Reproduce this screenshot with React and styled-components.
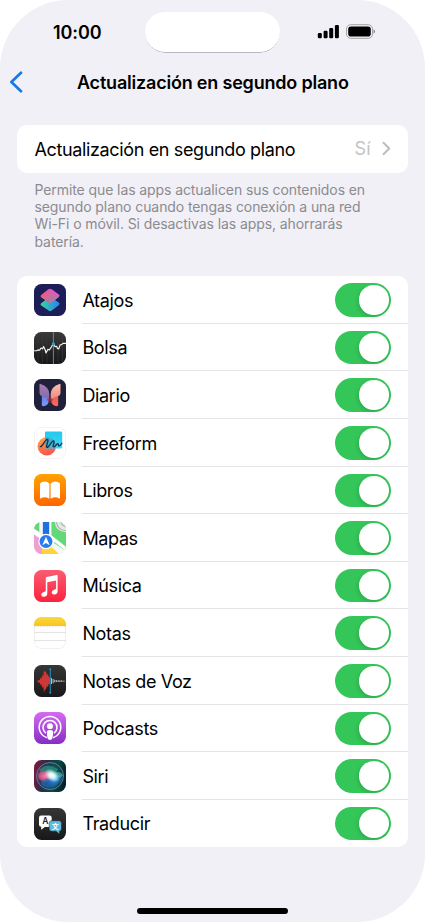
import React, { useState } from "react";
import styled, { createGlobalStyle } from "styled-components";

const GlobalStyle = createGlobalStyle`
  * {
    box-sizing: border-box;
  }

  body {
    margin: 0;
    background: #ffffff;
    font-family: Inter, "Liberation Sans", sans-serif;
    color: #000000;
  }

  svg {
    display: block;
  }
`;

const Screen = styled.div`
  width: 425px;
  height: 922px;
  display: flex;
  flex-direction: column;
  background: #f1f0f6;
  border-radius: 68px;
  overflow: hidden;
`;

const StatusBar = styled.div`
  display: grid;
  grid-template-columns: 145px 135px 145px;
  height: 64px;
  padding-top: 12px;
  flex-shrink: 0;
`;

const Clock = styled.div`
  padding-left: 53px;
  line-height: 41px;
  font-size: 18px;
  font-weight: 600;
  letter-spacing: -0.1px;
`;

const Island = styled.div`
  height: 40px;
  border-radius: 20px;
  background: #ffffff;
  box-shadow: 0 1px 0.5px -0.6px rgba(60, 60, 65, 0.6);
`;

const StatusIcons = styled.div`
  display: flex;
  align-items: flex-start;
  gap: 7px;
  padding: 12px 0 0 37px;
`;

const NavBar = styled.div`
  display: flex;
  align-items: center;
  height: 36px;
  padding-left: 9px;
  flex-shrink: 0;
`;

const BackButton = styled.button`
  width: 68px;
  padding: 0;
  border: 0;
  background: none;
`;

const Title = styled.h1`
  margin: 0;
  padding-top: 1px;
  font-size: 18px;
  line-height: 36px;
  font-weight: 600;
  letter-spacing: -0.2px;
  white-space: nowrap;
`;

const Card = styled.div`
  width: 391px;
  margin: ${(props) => props.$top}px 0 0 17px;
  background: #ffffff;
  border-radius: 10px;
  overflow: hidden;
  flex-shrink: 0;
`;

const LinkRow = styled.div`
  display: flex;
  align-items: center;
  height: 47.5px;
  padding: 0 17.5px;
`;

const Label = styled.span`
  flex: 1;
  padding-top: 1.5px;
  font-size: 18px;
  letter-spacing: ${(props) => props.$spacing || "-0.36px"};
  white-space: nowrap;
`;

const Value = styled.span`
  margin-right: 11px;
  font-size: 18px;
  color: #c3c3c7;
`;

const Description = styled.p`
  width: 360px;
  margin: 8px 0 0 34.5px;
  font-size: 14px;
  line-height: 17.4px;
  color: #8b8b90;
  letter-spacing: -0.09px;
  flex-shrink: 0;
`;

const AppRow = styled.div`
  display: flex;
  align-items: center;
  height: 47.62px;
  padding-left: 17.4px;
`;

const AppContent = styled.div`
  display: flex;
  flex: 1;
  align-items: center;
  align-self: stretch;
  margin-left: 16px;
  padding-right: 17.5px;
  border-bottom: 1px solid ${(props) => (props.$last ? "transparent" : "#e4e4e7")};
`;

const Switch = styled.button`
  display: flex;
  align-items: center;
  justify-content: ${(props) => (props.$on ? "flex-end" : "flex-start")};
  width: 55.5px;
  height: 33.5px;
  margin-top: 1px;
  padding: 0 2px;
  border: 0;
  border-radius: 17px;
  background: ${(props) => (props.$on ? "#34c659" : "#e9e9ea")};
`;

const Knob = styled.span`
  width: 29.5px;
  height: 29.5px;
  border-radius: 50%;
  background: #ffffff;
  box-shadow: -1px 2px 4px rgba(0, 0, 0, 0.14);
`;

const HomeArea = styled.div`
  display: flex;
  flex: 1;
  align-items: flex-end;
  justify-content: center;
  padding-bottom: 8.5px;
`;

const HomeBar = styled.div`
  width: 151px;
  height: 5.5px;
  border-radius: 3px;
  background: #000000;
`;

const IconSvg = styled.svg`
  width: 32px;
  height: 32px;
  border-radius: 7.5px;
  flex-shrink: 0;
`;

function AppIcon({ children }) {
  return <IconSvg viewBox="0 0 32 32">{children}</IconSvg>;
}

function Gradient({ id, from, to, x2 = 0, y2 = 1 }) {
  return (
    <linearGradient id={id} x1="0" y1="0" x2={x2} y2={y2}>
      <stop offset="0" stopColor={from} />
      <stop offset="1" stopColor={to} />
    </linearGradient>
  );
}

function AtajosIcon() {
  return (
    <AppIcon>
      <defs>
        <Gradient id="atajosTop" from="#f25a78" to="#d65ccb" x2={0.8} y2={0} />
        <Gradient id="atajosBottom" from="#35d6a4" to="#2b7ff0" x2={1} y2={0} />
        <Gradient id="atajosFold" from="#f0607e" to="#9a83a8" x2={1} y2={0.4} />
      </defs>
      <rect width="32" height="32" fill="#1d1d58" />
      <path d="M7.2 19.2 14.6 13.6q1.4-1 2.8 0L24.8 18.6q1.7 1.2 0 2.6L17.8 26.6q-1.6 1.2-3.2 0L7.2 21.4q-1.5-1.1 0-2.2Z" fill="url(#atajosBottom)" />
      <path d="M7.2 11 14.4 5.3q1.7-1.3 3.4 0L24.8 10.4q1.7 1.2 0 2.5L17.8 18.3q-1.6 1.2-3.2 0L7.2 13.3q-1.5-1.1 0-2.3Z" fill="url(#atajosTop)" />
      <path d="m16.8 9.4 8 3.6-7 5.3q-1.6 1.2-3.2 0L7.2 13.3Z" fill="url(#atajosFold)" opacity="0.85" />
    </AppIcon>
  );
}

function BolsaIcon() {
  return (
    <AppIcon>
      <defs>
        <Gradient id="bolsaBg" from="#393939" to="#171717" />
      </defs>
      <rect width="32" height="32" fill="url(#bolsaBg)" />
      <path d="M4 0v32M8.500 0v32M13 0v32M24 0v32M28.500 0v32" stroke="#3d3d3d" strokeWidth="0.5" />
      <path d="M19.400 0v32" stroke="#2d9bc9" strokeWidth="1" />
      <path d="M0 18.700h2.500l1.500-.8 1.700.2L7 16l1.600.8 1-2.300 1.600 3.500.8 3 1.800-3.600 1.500.6 2.200-3.200 1.900-3.600 1.700 3.500 1.500-.4.900 2.100 1.200.5 1.500-4.100 1.500-.2 1.200-1.300H32" fill="none" stroke="#f4f4f4" strokeWidth="1.15" strokeLinejoin="round" />
      <circle cx="19.400" cy="11.800" r="1.600" fill="#2d9bc9" />
    </AppIcon>
  );
}

function DiarioIcon() {
  return (
    <AppIcon>
      <defs>
        <Gradient id="diarioLeft" from="#a77fb0" to="#7a66ab" />
        <Gradient id="diarioRight" from="#f8c0ab" to="#f47f78" />
        <Gradient id="diarioBlue" from="#6779dc" to="#789cff" />
        <Gradient id="diarioRed" from="#e65c5a" to="#ff675b" />
      </defs>
      <rect width="32" height="32" fill="#20203a" />
      <path d="M7.800 15.600 14.800 18v4.500q-1.500 5-6 4.600-1-.2-1-1.300Z" fill="url(#diarioBlue)" />
      <path d="M24.200 15.600 17.200 18v4.500q1.500 5 6 4.600 1-.2 1-1.300Z" fill="url(#diarioRed)" />
      <path d="M5.500 5.600q0-1 1-.7 8.300 2.500 8.800 10v7.200q-1.700-4-7-4.900-2.600-.6-2.800-3Z" fill="url(#diarioLeft)" />
      <path d="M26.500 5.600q0-1-1-.7-8.300 2.500-8.800 10v7.200q1.700-4 7-4.900 2.600-.6 2.800-3Z" fill="url(#diarioRight)" />
      <path d="M15.300 19v5.800l-2.300-4.600ZM16.700 19v5.800l2.300-4.600Z" fill="#a43c5c" />
    </AppIcon>
  );
}

function FreeformIcon() {
  return (
    <AppIcon>
      <defs>
        <Gradient id="freeformSquare" from="#23c9ed" to="#43d5f5" />
        <Gradient id="freeformCircle" from="#ffad4c" to="#fb5550" x2={0.3} />
      </defs>
      <rect x="0.300" y="0.300" width="31.400" height="31.400" rx="7.300" fill="#fff" stroke="#e5e5e5" strokeWidth="0.6" />
      <circle cx="12.800" cy="19.200" r="9.200" fill="url(#freeformCircle)" />
      <rect x="11" y="4.400" width="17.200" height="17.200" rx="1.300" fill="url(#freeformSquare)" />
      <path d="M11 10.200a9.200 9.200 0 0 1 10.700 11.400H12.300q-1.300 0-1.300-1.300Z" fill="#4b8fa8" opacity="0.5" />
      <path d="M6.300 19.600c2.200.6 4.300-6.900 7-7.200 2.300-.1-2.300 8-.2 8 2.200 0 4.400-7.200 6.500-6.500 1.800.7-1.700 5.600.2 5.900 1.900.2 2.600-3.700 4.100-3.200 1 .4-.2 2.100 1 2.300q1.400.2 2.900-2.600" fill="none" stroke="#15334b" strokeWidth="1.35" strokeLinecap="round" />
    </AppIcon>
  );
}

function LibrosIcon() {
  return (
    <AppIcon>
      <defs>
        <Gradient id="librosBg" from="#ffa300" to="#ff6500" />
      </defs>
      <rect width="32" height="32" fill="url(#librosBg)" />
      <path d="M15.400 9.700Q13.700 7.600 10.800 7.600 7.800 7.600 6 9.600v14.500q0 .7.700.3 1.900-1.200 4.100-1.200t4 1.200q.6.400.6-.3ZM16.600 9.700q1.700-2.100 4.600-2.100 3 0 4.800 2v14.500q0 .7-.7.300-1.900-1.200-4.100-1.200t-4 1.200q-.6.400-.6-.3Z" fill="#fff" />
    </AppIcon>
  );
}

function MapasIcon() {
  return (
    <AppIcon>
      <rect width="32" height="32" fill="#f2f3f3" />
      <path d="M0 0h5.300v10L0 6.500Z" fill="#69d477" />
      <path d="M17.500 0H32v26L17.500 14Z" fill="#63d878" />
      <path d="M21 0q0 9.500 11 10.300V0Z" fill="#e4ebe5" />
      <path d="M22.500 0q.8 8 9.500 8.700M27 0q.5 4 5 4.600" fill="none" stroke="#a9b5ad" strokeWidth="1.1" />
      <path d="M0 12.500 8 18v14H0Z" fill="#ef9fd3" />
      <path d="M8 32v-8h8l9 8Z" fill="#ffd43b" />
      <path d="m18 22 14 8v2h-7Z" fill="#f7f7f7" />
      <path d="m20 21 12 8v-5l-9-7Z" fill="#76dd86" />
      <path d="m17 13 15 12v4L17 17Z" fill="#fff" />
      <path d="M0 7.200 12 16v3.500L0 12Z" fill="#fff" />
      <rect x="7.800" width="8.400" height="17" fill="#fff" />
      <rect x="8.800" width="6.400" height="17" fill="#2070de" />
      <circle cx="12" cy="19.500" r="7.700" fill="#fff" />
      <circle cx="12" cy="19.500" r="6.500" fill="#267cf0" />
      <path d="m12 14.700 3.300 7.600q.4 1-.5.500L12 21.100l-2.800 1.700q-.9.500-.5-.5Z" fill="#fff" />
    </AppIcon>
  );
}

function MusicaIcon() {
  return (
    <AppIcon>
      <defs>
        <Gradient id="musicaBg" from="#fb5c72" to="#fb233e" />
      </defs>
      <rect width="32" height="32" fill="url(#musicaBg)" />
      <path
        d="M11.800 7.900q0-.8.800-1l10-2q1-.2 1 .8v15.200q0 3.200-3.200 3.500-2.600.2-2.700-2 0-2.200 2.500-2.700 1.900-.2 1.900-1.500v-7.700l-8.800 1.800v11q0 3.200-3.400 3.500-2.600.2-2.700-2 0-2.200 2.600-2.700 2-.2 2-1.500Z"
        fill="#fff"
      />
    </AppIcon>
  );
}

function NotasIcon() {
  return (
    <AppIcon>
      <defs>
        <Gradient id="notasTop" from="#fcd83f" to="#f8c51b" />
      </defs>
      <rect x="0.300" y="0.300" width="31.400" height="31.400" rx="7.300" fill="#fff" stroke="#dedede" strokeWidth="0.6" />
      <rect width="32" height="9" fill="url(#notasTop)" />
      <path d="M0 9.700h32" stroke="#bdb9ad" strokeWidth="0.6" strokeDasharray="0.6 0.9" />
      <path d="M0 15.500h32M0 23.500h32" stroke="#d8d8da" strokeWidth="0.7" />
    </AppIcon>
  );
}

function NotasDeVozIcon() {
  return (
    <AppIcon>
      <defs>
        <Gradient id="vozBg" from="#363637" to="#19191b" />
      </defs>
      <rect width="32" height="32" fill="url(#vozBg)" />
      <path d="M1.500 16h2l1-1 1 .4.900-2.900.9 1.500.9-4.500.9 2.500 1-6.700 1 2.200.9-1.500.9 4.400.9-1.600.9 3.200.9-.5.500 2.500v4l-.5 1.500-.9-.5-.9 3.200-.9-1.600-.9 4.400-.9-1.500-1 4.200-1-7-.9 2.500-.9-4.500-.9 1.500-.9-2.900-1 .4-1-1.500Z" fill="#cf3935" />
      <path d="M17 13h1v6h-1ZM18.600 14h1v4.300h-1ZM20.200 14.800h1v2.500h-1ZM21.800 15.100h1V17h-1ZM22.800 15.700h8v.7h-8ZM24.500 15.200h1V17h-1ZM27 15.300h.8v1.500H27Z" fill="#bcbcbd" />
      <path d="M16.300 3.800v24.400" stroke="#268dc4" strokeWidth="1" />
      <circle cx="16.300" cy="4.300" r="1" fill="#268dc4" />
      <circle cx="16.300" cy="27.700" r="1" fill="#268dc4" />
    </AppIcon>
  );
}

function PodcastsIcon() {
  return (
    <AppIcon>
      <defs>
        <Gradient id="podcastsBg" from="#d66bf2" to="#852ec4" />
      </defs>
      <rect width="32" height="32" fill="url(#podcastsBg)" />
      <g fill="none" stroke="#fff" strokeWidth="1.5" strokeLinecap="round">
        <path d="M12.300 25.400a10.800 10.800 0 1 1 7.400 0" />
        <path d="M11.500 20.800a7 7 0 1 1 9 0" />
      </g>
      <circle cx="16" cy="14.200" r="2.900" fill="#fff" />
      <path d="M12.900 20.400q0-2.300 3.100-2.300t3.100 2.300q0 3.300-.8 6.200-.4 1.400-2.300 1.400t-2.300-1.400q-.8-2.900-.8-6.200Z" fill="#fff" />
    </AppIcon>
  );
}

function SiriIcon() {
  return (
    <AppIcon>
      <defs>
        <linearGradient id="siriBg" x1="0" y1="0.300" x2="1" y2="0.500">
          <stop offset="0" stopColor="#7d173f" />
          <stop offset="0.350" stopColor="#24304a" />
          <stop offset="0.700" stopColor="#084a44" />
          <stop offset="1" stopColor="#071d2d" />
        </linearGradient>
        <radialGradient id="siriPink">
          <stop offset="0" stopColor="#ff7ba6" />
          <stop offset="0.700" stopColor="#d9568c" stopOpacity="0.85" />
          <stop offset="1" stopColor="#a0406f" stopOpacity="0.300" />
        </radialGradient>
        <radialGradient id="siriBlue">
          <stop offset="0" stopColor="#58b8ff" />
          <stop offset="1" stopColor="#1a70cc" stopOpacity="0.300" />
        </radialGradient>
        <radialGradient id="siriGlow">
          <stop offset="0" stopColor="#fff" />
          <stop offset="0.400" stopColor="#f2fdff" stopOpacity="0.900" />
          <stop offset="1" stopColor="#b9f6ff" stopOpacity="0" />
        </radialGradient>
      </defs>
      <rect width="32" height="32" fill="url(#siriBg)" />
      <circle cx="16" cy="16" r="13.500" fill="#125a70" fillOpacity="0.350" stroke="#8793a8" strokeOpacity="0.800" strokeWidth="0.900" />
      <path d="M5 10q8-8 19-1-1 5-7 8Q9 17 5 10Z" fill="#2c937c" opacity="0.750" />
      <ellipse cx="10.500" cy="16.200" rx="7.500" ry="6" transform="rotate(10 10.500 16.200)" fill="url(#siriPink)" />
      <ellipse cx="21" cy="20" rx="8" ry="5" transform="rotate(-20 21 20)" fill="url(#siriBlue)" />
      <ellipse cx="15.500" cy="23" rx="8.500" ry="4.500" fill="#1f6fc8" opacity="0.600" />
      <path d="M17 15q8-6 12 .5-4 5-12-.5Z" fill="#55c4c1" opacity="0.650" />
      <ellipse cx="17.800" cy="15.500" rx="8.500" ry="6" transform="rotate(35 17.800 15.500)" fill="url(#siriGlow)" />
    </AppIcon>
  );
}

function TraducirIcon() {
  return (
    <AppIcon>
      <defs>
        <Gradient id="traducirBg" from="#363637" to="#18181a" />
      </defs>
      <rect width="32" height="32" fill="url(#traducirBg)" />
      <path d="M7 7.500h8.500q2.200 0 2.200 2.200v7q0 2.200-2.200 2.200h-4.800L8 21.300q-.8.600-.8-.4v-2.100Q5 18.700 5 16.700v-7q0-2.200 2-2.200Z" fill="#fff" />
      <path d="M17.500 12.700H25q2.500 0 2.500 2.500v5.600q0 2.200-2 2.400v1.900q0 1-.8.300l-2.800-2.200h-4.400q-2.300 0-2.300-2.300v-5.700q0-2.500 2.300-2.500Z" fill="#5dbbe0" stroke="#252527" strokeWidth="0.5" />
      <text x="11.300" y="16.200" textAnchor="middle" fontFamily="Inter, sans-serif" fontSize="8.500" fontWeight="600" fill="#222">A</text>
      <text x="21.300" y="20.800" textAnchor="middle" fontFamily="'Noto Sans CJK SC', sans-serif" fontSize="7" fontWeight="700" fill="#fff">文</text>
    </AppIcon>
  );
}

const apps = [
  { name: "Atajos", icon: <AtajosIcon /> },
  { name: "Bolsa", icon: <BolsaIcon /> },
  { name: "Diario", icon: <DiarioIcon /> },
  { name: "Freeform", icon: <FreeformIcon /> },
  { name: "Libros", icon: <LibrosIcon /> },
  { name: "Mapas", icon: <MapasIcon /> },
  { name: "Música", icon: <MusicaIcon /> },
  { name: "Notas", icon: <NotasIcon /> },
  { name: "Notas de Voz", icon: <NotasDeVozIcon /> },
  { name: "Podcasts", icon: <PodcastsIcon /> },
  { name: "Siri", icon: <SiriIcon /> },
  { name: "Traducir", icon: <TraducirIcon /> },
];

function App() {
  const [disabledApps, setDisabledApps] = useState([]);

  const toggleApp = (name) => {
    setDisabledApps(
      disabledApps.includes(name)
        ? disabledApps.filter((el) => el !== name)
        : [...disabledApps, name]
    );
  };

  return (
    <>
      <GlobalStyle />
      <Screen>
        <StatusBar>
          <Clock>10:00</Clock>
          <Island />
          <StatusIcons>
            <svg width="22" height="15" viewBox="0 0 22 15">
              <rect x="0.800" y="9" width="4" height="5.300" rx="1.200" />
              <rect x="6.600" y="6.800" width="4" height="7.500" rx="1.200" />
              <rect x="12.200" y="3.900" width="4" height="10.400" rx="1.200" />
              <rect x="17.900" y="1" width="4" height="13.300" rx="1.200" />
            </svg>
            <svg width="30" height="15" viewBox="0 0 30 15">
              <rect x="0.500" y="0.700" width="26" height="13.600" rx="4.200" fill="none" stroke="#a2a2a7" />
              <rect x="2.200" y="2.400" width="22.600" height="10.200" rx="2.800" />
              <path d="M27.500 5.300q1.500.7 1.500 2.200t-1.500 2.200Z" fill="#88888d" />
            </svg>
          </StatusIcons>
        </StatusBar>
        <NavBar>
          <BackButton aria-label="Ajustes">
            <svg width="14" height="22" viewBox="0 0 14 22" fill="none" stroke="#147aec" strokeWidth="2.700" strokeLinecap="round" strokeLinejoin="round">
              <path d="M12 1.800 2.400 11 12 20.200" />
            </svg>
          </BackButton>
          <Title>Actualización en segundo plano</Title>
        </NavBar>
        <Card $top={25}>
          <LinkRow>
            <Label>Actualización en segundo plano</Label>
            <Value>Sí</Value>
            <svg width="9" height="15" viewBox="0 0 9 15" fill="none" stroke="#bdbdc1" strokeWidth="2" strokeLinecap="round" strokeLinejoin="round">
              <path d="m1.500 1.800 5.700 5.700-5.700 5.700" />
            </svg>
          </LinkRow>
        </Card>
        <Description>
          Permite que las apps actualicen sus contenidos en
          <br />
          segundo plano cuando tengas conexión a una red
          <br />
          Wi-Fi o móvil. Si desactivas las apps, ahorrarás
          <br />
          batería.
        </Description>
        <Card $top={26}>
          {apps.map((el, index) => (
            <AppRow key={el.name}>
              {el.icon}
              <AppContent $last={index === apps.length - 1}>
                <Label>{el.name}</Label>
                <Switch
                  role="switch"
                  aria-label={el.name}
                  aria-checked={!disabledApps.includes(el.name)}
                  $on={!disabledApps.includes(el.name)}
                  onClick={() => toggleApp(el.name)}
                >
                  <Knob />
                </Switch>
              </AppContent>
            </AppRow>
          ))}
        </Card>
        <HomeArea>
          <HomeBar />
        </HomeArea>
      </Screen>
    </>
  );
}

export default App;
